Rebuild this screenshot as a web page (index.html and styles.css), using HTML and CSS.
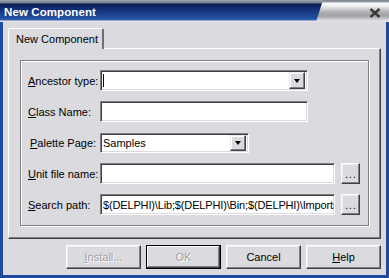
FILE: index.html
```html
<!DOCTYPE html>
<html lang="en">
<head>
    <meta charset="UTF-8">
    <meta name="viewport" content="width=device-width, initial-scale=1.0">
    <title>New Component</title>
    <link rel="stylesheet" href="styles.css">
</head>
<body>
    <div class="window">
        <div class="titlebar">
            <span class="title">New Component</span>
            <div class="caption">
                <svg class="close-icon" width="12" height="10" viewBox="0 0 12 10">
                    <path d="M1.5 1 L10.5 9 M10.5 1 L1.5 9" stroke="#3a3a3a" stroke-width="2.4" fill="none"/>
                </svg>
            </div>
        </div>
        <div class="client">
            <div class="tabs">
                <div class="tab">New Component</div>
            </div>
            <div class="panel">
                <div class="group">
                    <div class="row">
                        <label class="label"><u>A</u>ncestor type:</label>
                        <div class="field combo wide">
                            <span class="value"><span class="caret"></span></span>
                            <span class="drop"><span class="arrow"></span></span>
                        </div>
                    </div>
                    <div class="row">
                        <label class="label"><u>C</u>lass Name:</label>
                        <div class="field wide"><span class="value"></span></div>
                    </div>
                    <div class="row">
                        <label class="label label-shift"><u>P</u>alette Page:</label>
                        <div class="field combo narrow">
                            <span class="value">Samples</span>
                            <span class="drop"><span class="arrow"></span></span>
                        </div>
                    </div>
                    <div class="row">
                        <label class="label"><u>U</u>nit file name:</label>
                        <div class="field long"><span class="value"></span></div>
                        <button class="btn browse">...</button>
                    </div>
                    <div class="row">
                        <label class="label"><u>S</u>earch path:</label>
                        <div class="field long"><span class="value path">$(DELPHI)\Lib;$(DELPHI)\Bin;$(DELPHI)\Imports</span></div>
                        <button class="btn browse">...</button>
                    </div>
                </div>
            </div>
            <div class="buttons">
                <button class="btn action disabled"><u>I</u>nstall...</button>
                <button class="btn action default disabled">OK</button>
                <button class="btn action">Cancel</button>
                <button class="btn action"><u>H</u>elp</button>
            </div>
        </div>
    </div>
</body>
</html>
```

FILE: styles.css
```css
body {
    margin: 0;
    font-family: "Liberation Sans", Arial, sans-serif;
    font-size: 11px;
    color: #000;
}
.window {
    width: 389px;
    height: 278px;
    display: flex;
    flex-direction: column;
    background-color: #1d4a9e;
}
.titlebar {
    height: 22px;
    display: flex;
    align-items: stretch;
    background: linear-gradient(to bottom, #a4a9b2 0, #737a88 3px, #0b1d56 4px, #14337a 10px, #2553a6 19px, #3a67b4 20px, #e6e6ea 21px, #e6e6ea 22px);
}
.title {
    color: #fff;
    font-weight: bold;
    font-size: 11.5px;
    padding: 6px 0 0 4px;
    letter-spacing: 0.1px;
}
.caption {
    margin-left: auto;
    width: 73px;
    display: flex;
    align-items: flex-start;
    justify-content: flex-end;
    background: linear-gradient(to bottom, #7c828c 0, #9aa0a8 2px, #fbfbfb 3px, #f0f0f2 6px, #b0b0b4 12px, #a2a2a6 16px, #d8d8dc 20px, #e6e6ea 22px);
    clip-path: polygon(7px 0, 100% 0, 100% 100%, 0 100%);
}
.close-icon {
    margin: 8px 8px 0 0;
}
.client {
    flex: 1;
    margin: 0 3px 3px 3px;
    background-color: #dadadf;
    padding: 6px 5px 6px 5px;
    display: flex;
    flex-direction: column;
}
.tabs {
    display: flex;
    height: 20px;
    position: relative;
    z-index: 1;
}
.tab {
    width: 90px;
    height: 20px;
    padding-left: 3px;
    line-height: 20px;
    text-align: center;
    background-color: #dadadf;
    border-top: 1px solid #fff;
    border-left: 1px solid #fff;
    border-right: 2px solid #707074;
    border-radius: 2px 2px 0 0;
    margin-bottom: -1px;
}
.panel {
    height: 191px;
    box-sizing: border-box;
    border-top: 1px solid #fff;
    border-left: 1px solid #fff;
    border-right: 1px solid #404044;
    border-bottom: 1px solid #404044;
    box-shadow: inset -1px -1px 0 #808084;
    padding: 11px 11px 11px 11px;
}
.group {
    height: 166px;
    box-sizing: border-box;
    border: 1px solid #808084;
    box-shadow: inset 1px 1px 0 #fff, 1px 1px 0 #fff;
    padding: 9px 7px 0 7px;
    display: flex;
    flex-direction: column;
    gap: 10px;
}
.row {
    display: flex;
    align-items: center;
    height: 21px;
}
.label {
    width: 72px;
    flex: none;
    white-space: nowrap;
}
.label-shift {
    padding-left: 2px;
    width: 70px;
}
.field {
    height: 21px;
    box-sizing: border-box;
    background-color: #fff;
    border-top: 1px solid #808084;
    border-left: 1px solid #808084;
    border-right: 1px solid #fff;
    border-bottom: 1px solid #fff;
    box-shadow: inset 1px 1px 0 #404044, inset -1px -1px 0 #dadadf;
    display: flex;
    align-items: center;
    overflow: hidden;
}
.value {
    flex: 1;
    padding-left: 2px;
    white-space: nowrap;
    overflow: hidden;
    display: flex;
    align-items: center;
}
.path {
    letter-spacing: -0.15px;
}
.caret {
    width: 1px;
    height: 13px;
    background-color: #000;
}
.wide {
    width: 208px;
}
.narrow {
    width: 149px;
    height: 20px;
}
.long {
    width: 235px;
}
.drop {
    width: 16px;
    height: 17px;
    margin-right: 2px;
    box-sizing: border-box;
    background-color: #dadadf;
    border-top: 1px solid #ececf0;
    border-left: 1px solid #ececf0;
    border-right: 1px solid #404044;
    border-bottom: 1px solid #404044;
    box-shadow: inset -1px -1px 0 #808084, inset 1px 1px 0 #fff;
    display: flex;
    align-items: center;
    justify-content: center;
}
.narrow .drop {
    height: 16px;
}
.arrow {
    width: 0;
    height: 0;
    border-left: 3.5px solid transparent;
    border-right: 3.5px solid transparent;
    border-top: 4px solid #000;
    margin-top: 1px;
}
.btn {
    font-family: "Liberation Sans", Arial, sans-serif;
    font-size: 11px;
    color: #000;
    background-color: #dadadf;
    box-sizing: border-box;
    border-top: 1px solid #fff;
    border-left: 1px solid #fff;
    border-right: 1px solid #404044;
    border-bottom: 1px solid #404044;
    box-shadow: inset -1px -1px 0 #808084, inset 1px 1px 0 #ececf0;
    padding: 0;
}
.browse {
    width: 19px;
    height: 21px;
    margin-left: 6px;
    font-size: 10px;
    line-height: 16px;
    padding-top: 2px;
    letter-spacing: 1px;
    padding-left: 1px;
}
.buttons {
    display: flex;
    justify-content: flex-end;
    gap: 5px;
    margin-top: 6px;
}
.action {
    width: 75px;
    height: 24px;
}
.default {
    border: 1px solid #000;
    box-shadow: inset -1px -1px 0 #404044, inset 1px 1px 0 #fff, inset -2px -2px 0 #808084;
}
.disabled {
    color: #a0a0a4;
    text-shadow: 1px 1px 0 #fff;
}
```
